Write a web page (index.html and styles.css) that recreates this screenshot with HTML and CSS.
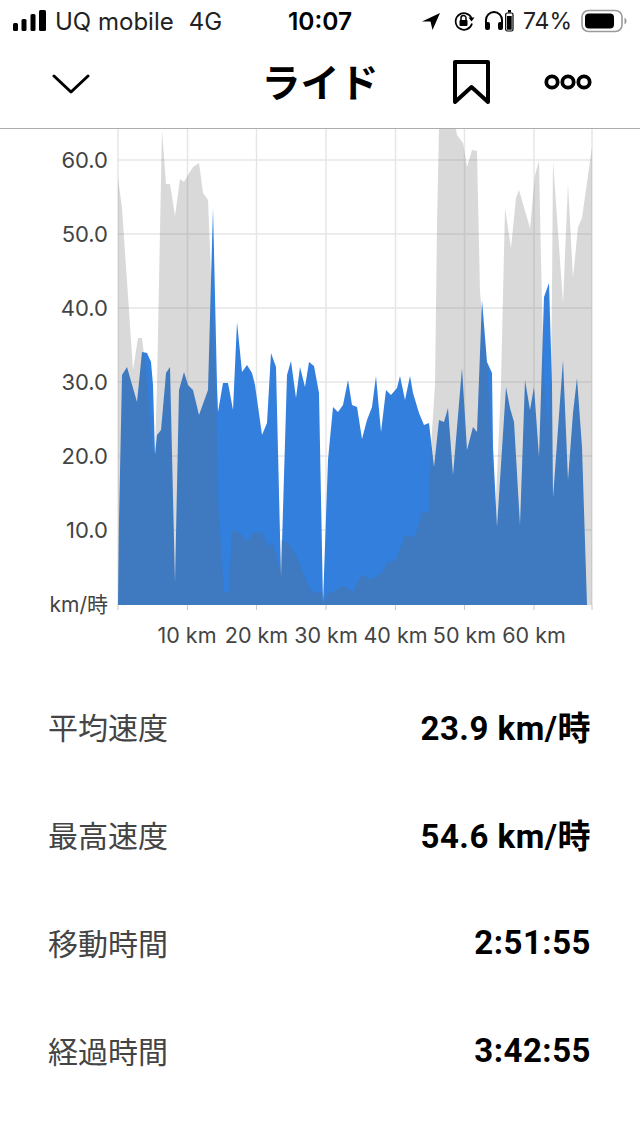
FILE: index.html
```html
<!DOCTYPE html>
<html lang="ja">
<head>
<meta charset="utf-8">
<title>ライド</title>
<link rel="stylesheet" href="styles.css">
</head>
<body>
<div class="page">
  <div class="status">
    <div class="status-left">
      <svg class="signal" width="34" height="22" viewBox="0 0 34 22"><rect x="0" y="14" width="5" height="8" rx="1.500"/><rect x="8.500" y="10" width="5" height="12" rx="1.500"/><rect x="17.500" y="5" width="5" height="17" rx="1.500"/><rect x="26" y="1" width="7" height="21" rx="1.500"/></svg>
      <span class="carrier">UQ mobile</span>
      <span class="network">4G</span>
    </div>
    <div class="clock">10:07</div>
    <div class="status-right">
      <svg class="icon-arrow" width="18" height="18" viewBox="0 0 18 18"><path d="M18 1 0 9.500 8.500 9.500 10.500 18Z"/></svg>
      <svg class="icon-rot" width="22" height="22" viewBox="0 0 22 22"><path d="M18.500 8A8.300 8.300 0 1 0 19 13.500" fill="none" stroke="#000" stroke-width="1.700"/><path d="M15.500 7.500h6l-3 4z"/><rect x="6.500" y="10" width="8" height="6" rx="1"/><path d="M8 10V8a2.500 2.500 0 0 1 5 0v2" fill="none" stroke="#000" stroke-width="1.500"/></svg>
      <svg class="icon-phones" width="20" height="22" viewBox="0 0 20 22"><path d="M2 18V10a8 8 0 0 1 16 0v8" fill="none" stroke="#000" stroke-width="2"/><rect x="1" y="12" width="5" height="8" rx="2"/><rect x="14" y="12" width="5" height="8" rx="2"/></svg>
      <svg class="icon-case" width="9" height="22" viewBox="0 0 9 22"><rect x=".7" y="3" width="7.300" height="18" rx="1.500" fill="none" stroke="#000" stroke-width="1.200"/><rect x="3" y="0" width="3" height="2.500"/><rect x="2" y="6" width="4.700" height="13.700"/></svg>
      <span class="percent">74%</span>
      <svg width="46" height="24" viewBox="0 0 46 24"><rect x="1" y="1.500" width="40" height="21" rx="6.500" fill="none" stroke="#9a9a9a" stroke-width="1.600"/><rect x="4" y="4.500" width="29" height="15" rx="4"/><path d="M43.500 8.500a4 4 0 0 1 0 7z" fill="#9a9a9a"/></svg>
    </div>
  </div>

  <header class="nav">
    <svg class="nav-chevron" width="38" height="20" viewBox="0 0 38 20"><path d="M2 2 19 18 36 2" fill="none" stroke="#000" stroke-width="3" stroke-linecap="round" stroke-linejoin="round"/></svg>
    <h1 class="nav-title">ライド</h1>
    <div class="nav-actions">
      <svg width="37" height="44" viewBox="0 0 37 44"><path d="M2 2h33v40L18.500 27 2 42Z" fill="none" stroke="#000" stroke-width="4" stroke-linejoin="round"/></svg>
      <svg width="48" height="16" viewBox="0 0 48 16"><circle cx="8" cy="8" r="5.700"/><circle cx="24" cy="8" r="5.700"/><circle cx="40" cy="8" r="5.700"/></svg>
    </div>
  </header>

  <svg class="chart" width="640" height="529" viewBox="0 129 640 529">
    <g class="grid">
      <path d="M118 160H592M118 234H592M118 308H592M118 382H592M118 456H592M118 530H592"/>
      <path d="M118 129V605M187.500 129V605M256.500 129V605M326 129V605M395.500 129V605M464.500 129V605M534 129V605M592 129V605"/>
    </g>
    <path class="ticks" d="M118 605v5M187.500 605v5M256.500 605v5M326 605v5M395.500 605v5M464.500 605v5M534 605v5M592 605v5"/>
    <polygon class="speed" points="118,605 119,520 122,375 127,367 137,402 142,352 147,353 151,362 153,385 155,455 157,435 161,430 165,385 166,373 170,367 175,583 179,390 184,372 188,385 193,390 199,415 208,390 213,208 217,385 218,412 223,383 228,383 233,410 237,322 242,372 247,365 252,373 255,385 262,435 267,423 271,353 276,367 281,577 287,375 291,361 296,398 300,367 305,387 309,362 314,366 319,393 323,603 328,460 333,407 338,412 343,405 348,380 352,405 357,407 362,439 367,420 372,407 376,376 381,432 386,390 391,395 397,388 400,376 405,400 410,376 413,393 419,413 424,425 429,423 434,467 439,420 444,422 448,408 453,475 462,368 467,450 473,427 477,432 482,300 487,362 492,373 493,447 497,527 506,387 510,408 514,422 520,525 525,380 530,410 534,387 539,457 544,297 549,283 552,385 553,498 563,360 568,480 573,413 577,378 582,447 587,605"/>
    <polygon class="elevation" points="118,605 118,178 122,208 132,355 133,370 138,338 142,338 147,380 153,453 155,453 157,385 162,130 166,184 170,184 175,216 180,179 184,182 188,175 193,167 199,163 203,193 208,200 212,300 216,400 218,500 224,592 229,593 232,530 240,533 247,542 253,533 262,532 268,547 272,542 280,570 281,540 288,543 297,557 307,583 313,593 322,592 325,603 327,593 333,592 343,586 353,592 362,574 370,580 383,572 387,563 396,560 405,535 415,537 422,512 429,512 431,447 435,385 437,225 439,129 456,129 457,135 463,143 467,167 472,150 477,151 480,292 488,380 495,520 501,385 505,208 511,248 516,198 519,190 530,228 535,175 539,161 541,260 544,380 548,430 551,380 552,290 553,161 563,303 568,184 573,278 578,227 582,218 592,147 592,605"/>
    <g class="y-labels">
      <text x="108" y="168">60.0</text>
      <text x="108" y="242">50.0</text>
      <text x="108" y="316">40.0</text>
      <text x="108" y="390">30.0</text>
      <text x="108" y="464">20.0</text>
      <text x="108" y="538">10.0</text>
      <text x="108" y="612" class="unit">km/時</text>
    </g>
    <g class="x-labels">
      <text x="187" y="643">10 km</text>
      <text x="256.500" y="643">20 km</text>
      <text x="326" y="643">30 km</text>
      <text x="395.500" y="643">40 km</text>
      <text x="464.500" y="643">50 km</text>
      <text x="534" y="643">60 km</text>
    </g>
  </svg>

  <dl class="stats">
    <div class="stat"><dt>平均速度</dt><dd>23.9 km/時</dd></div>
    <div class="stat"><dt>最高速度</dt><dd>54.6 km/時</dd></div>
    <div class="stat"><dt>移動時間</dt><dd>2:51:55</dd></div>
    <div class="stat"><dt>経過時間</dt><dd>3:42:55</dd></div>
  </dl>
</div>
</body>
</html>
```
FILE: styles.css
```css
* { box-sizing: border-box; }
html, body { margin: 0; padding: 0; background: #fff; }
body { font-family: Inter, "Noto Sans CJK JP", sans-serif; color: #000; }
.page { width: 640px; height: 1136px; overflow: hidden; display: flex; flex-direction: column; }

.status { height: 42px; display: grid; grid-template-columns: 1fr auto 1fr; align-items: center; padding: 0 13px; }
.status-left { display: flex; align-items: center; gap: 8px; font-size: 24px; color: #222; }
.signal { margin-bottom: 3px; }
.network { margin-left: 7px; }
.clock { font-size: 24.500px; font-weight: 600; }
.status-right { display: flex; align-items: center; justify-content: flex-end; font-size: 23px; color: #222; }
.icon-arrow { margin-right: 13px; }
.icon-rot { margin-right: 9px; }
.icon-phones { margin-right: 1px; }
.icon-case { margin-right: 9px; }
.percent { margin-right: 9px; }

.nav { height: 87px; border-bottom: 1px solid #adadad; display: grid; grid-template-columns: 1fr auto 1fr; align-items: center; padding: 0 48px 6px; }
.nav-chevron { margin: 4px 0 0 4px; }
.nav-title { margin: 0; font-size: 39px; font-weight: 700; line-height: 1; }
.nav-actions { display: flex; align-items: center; justify-content: flex-end; gap: 54px; }
.nav-actions circle { fill: none; stroke: #000; stroke-width: 3.800; }

.chart { display: block; flex: none; }
.grid path { fill: none; stroke: #e6e6e6; stroke-width: 1.500; }
.ticks { fill: none; stroke: #c8c8c8; stroke-width: 1; }
.speed { fill: #327fdd; }
.elevation { fill: rgba(102, 102, 102, .25); }
.y-labels text { font-family: Inter, "Noto Sans CJK JP", sans-serif; font-size: 22px; fill: #444; text-anchor: end; }
.y-labels .unit { font-size: 21px; }
.x-labels text { font-family: Inter, sans-serif; font-size: 21.500px; fill: #444; text-anchor: middle; }

.stats { margin: 14px 0 0; padding: 0 49px 0 48px; display: flex; flex-direction: column; }
.stat { height: 108px; display: flex; justify-content: space-between; align-items: center; }
.stat dt { font-size: 30px; color: #444; }
.stat dd { margin: 0; font-family: Roboto, "Noto Sans CJK JP", sans-serif; font-size: 33px; letter-spacing: .5px; font-weight: 700; }
```
